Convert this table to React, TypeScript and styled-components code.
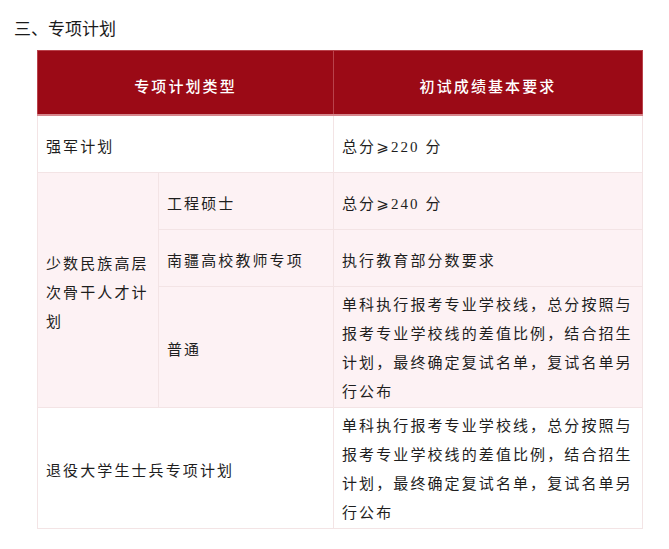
import React from "react";
import styled, { createGlobalStyle } from "styled-components";

const Global = createGlobalStyle`
  html, body { margin: 0; padding: 0; background: #ffffff; }
  body { font-family: "Noto Sans CJK SC", sans-serif; color: #222; }
`;

const Page = styled.div`
  padding: 14px 27px 20px 14px;
  width: 669px;
  box-sizing: border-box;
`;

const Title = styled.h3`
  margin: 0 0 8px 0;
  font-size: 17px;
  font-weight: 400;
  line-height: 28px;
  color: #1a1a1a;
  font-family: "Noto Sans CJK SC", sans-serif;
`;

const Table = styled.table`
  margin-left: 23px;
  width: 605px;
  border-collapse: collapse;
  table-layout: fixed;
  font-family: "Liberation Serif", "Noto Sans CJK SC", "DejaVu Sans", serif;
  font-size: 15px;
  letter-spacing: 2.1px;
  color: #1e1e1e;
`;

const Th = styled.th`
  background: #9b0a16;
  color: #ffffff;
  font-weight: 500;
  height: 58px;
  padding: 5px 0 0 0;
  text-align: center;
  border: 1px solid #b9424b;
  border-bottom: 2px solid #d6868c;
  border-left-color: #e8c7ca;
  &:first-child { border-left-color: #b9424b; }
`;

const Row = styled.tr<{ $pink?: boolean }>`
  background: ${(p) => (p.$pink ? "#fdf2f4" : "#ffffff")};
`;

const Td = styled.td<{ $tall?: boolean }>`
  border: 1px solid #f3e4e5;
  padding: ${(p) => (p.$tall ? "4px 6px 0 8px" : "6px 6px 0 8px")};
  height: ${(p) => (p.$tall ? "auto" : "50px")};
  line-height: 29px;
  vertical-align: middle;
  text-align: left;
  word-break: break-all;
`;

const longText = "单科执行报考专业学校线，总分按照与报考专业学校线的差值比例，结合招生计划，最终确定复试名单，复试名单另行公布";

export default function App() {
  return (
    <Page>
      <Global />
      <Title>三、专项计划</Title>
      <Table>
        <colgroup>
          <col style={{ width: "121px" }} />
          <col style={{ width: "175px" }} />
          <col style={{ width: "309px" }} />
        </colgroup>
        <thead>
          <tr>
            <Th colSpan={2}>专项计划类型</Th>
            <Th>初试成绩基本要求</Th>
          </tr>
        </thead>
        <tbody>
          <Row>
            <Td colSpan={2}>强军计划</Td>
            <Td>总分⩾220 分</Td>
          </Row>
          <Row $pink>
            <Td rowSpan={3}>少数民族高层次骨干人才计划</Td>
            <Td>工程硕士</Td>
            <Td>总分⩾240 分</Td>
          </Row>
          <Row $pink>
            <Td>南疆高校教师专项</Td>
            <Td>执行教育部分数要求</Td>
          </Row>
          <Row $pink>
            <Td>普通</Td>
            <Td $tall>{longText}</Td>
          </Row>
          <Row>
            <Td colSpan={2}>退役大学生士兵专项计划</Td>
            <Td $tall>{longText}</Td>
          </Row>
        </tbody>
      </Table>
    </Page>
  );
}
